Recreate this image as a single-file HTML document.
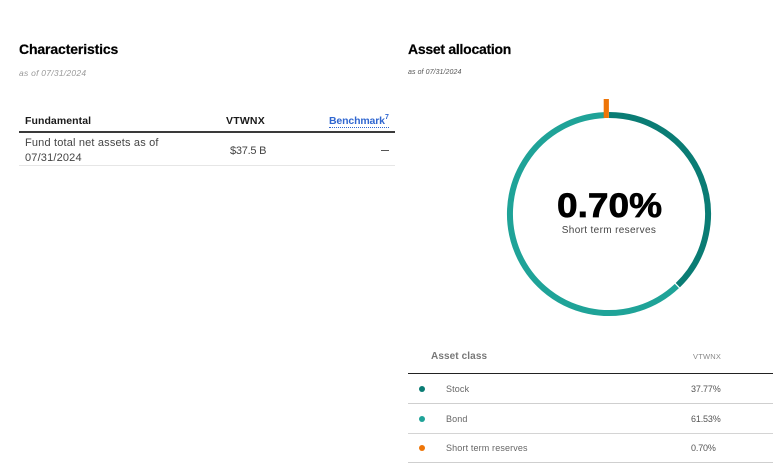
<!DOCTYPE html>
<html>
<head>
<meta charset="utf-8">
<style>
html,body{margin:0;padding:0;background:#fff}
body{width:773px;height:476px;position:relative;overflow:hidden;font-family:"Liberation Sans",sans-serif;color:#1a1a1a}
.t{position:absolute;white-space:nowrap;line-height:1}
.l{position:absolute}
.dot{position:absolute;width:6px;height:6px;border-radius:50%}
</style>
</head>
<body>
<div class="t" style="left:19px;top:42px;font-size:14px;font-weight:700;color:#000;letter-spacing:-.13px;-webkit-text-stroke:.2px #000">Characteristics</div>
<div class="t" style="left:19px;top:69px;font-size:8.5px;font-style:italic;color:#999;letter-spacing:.25px">as of 07/31/2024</div>

<div class="t" style="left:25px;top:116px;font-size:10.5px;font-weight:700;color:#1a1a1a;letter-spacing:.07px">Fundamental</div>
<div class="t" style="left:226px;top:116px;font-size:10.5px;font-weight:700;color:#1a1a1a;letter-spacing:.2px">VTWNX</div>
<div class="t" style="left:329px;top:116px;font-size:10.5px;font-weight:700;color:#2f66d0;letter-spacing:-.15px">Benchmark</div>
<div class="t" style="left:385px;top:114px;font-size:7px;font-weight:700;color:#2f66d0">7</div>
<div class="l" style="left:329px;top:127px;width:60px;border-top:1px dotted #2f66d0"></div>
<div class="l" style="left:19px;top:131px;width:376px;height:2px;background:#3a3a3a"></div>
<div class="t" style="left:25px;top:136px;font-size:11px;line-height:15px;color:#444;letter-spacing:.17px">Fund total net assets as of<br>07/31/2024</div>
<div class="t" style="left:230px;top:146px;font-size:11px;color:#444;letter-spacing:-.25px">$37.5 B</div>
<div class="l" style="left:381px;top:150px;width:8px;height:1px;background:#555"></div>
<div class="l" style="left:19px;top:165px;width:376px;height:1px;background:#e6e6e6"></div>

<div class="t" style="left:408px;top:42px;font-size:14px;font-weight:700;color:#000;letter-spacing:-.27px;-webkit-text-stroke:.2px #000">Asset allocation</div>
<div class="t" style="left:408px;top:69px;font-size:7px;font-style:italic;color:#555;letter-spacing:.08px">as of 07/31/2024</div>

<svg class="l" style="left:0;top:0" width="773" height="476" viewBox="0 0 773 476">
  <path d="M609 115 A99 99 0 0 1 677.8 285.2" fill="none" stroke="#0a7c74" stroke-width="6"/>
  <path d="M676.9 286 A99 99 0 1 1 604.5 115.1" fill="none" stroke="#1fa398" stroke-width="6"/>
  <rect x="603.7" y="99" width="5.2" height="19" fill="#ee7508"/>
  <text x="557" y="217" textLength="105" lengthAdjust="spacingAndGlyphs" font-family="Liberation Sans, sans-serif" font-size="34" font-weight="700" fill="#000" stroke="#000" stroke-width=".7">0.70%</text>
  <text x="609" y="233" text-anchor="middle" font-family="Liberation Sans, sans-serif" font-size="10" fill="#444" letter-spacing=".35">Short term reserves</text>
</svg>

<div class="t" style="left:431px;top:352px;font-size:10px;font-weight:700;color:#777;letter-spacing:.1px">Asset class</div>
<div class="t" style="left:693px;top:353px;font-size:7.5px;color:#8a8a8a;letter-spacing:.2px">VTWNX</div>
<div class="l" style="left:408px;top:373px;width:365px;height:1px;background:#222"></div>

<div class="dot" style="left:419px;top:386px;background:#0a7c74"></div>
<div class="t" style="left:446px;top:385px;font-size:9px;color:#666;letter-spacing:.14px">Stock</div>
<div class="t" style="left:691px;top:385px;font-size:9px;color:#555;letter-spacing:-.15px">37.77%</div>
<div class="l" style="left:408px;top:403px;width:365px;height:1px;background:#cfcfcf"></div>

<div class="dot" style="left:419px;top:416px;background:#1fa398"></div>
<div class="t" style="left:446px;top:415px;font-size:9px;color:#666;letter-spacing:.14px">Bond</div>
<div class="t" style="left:691px;top:415px;font-size:9px;color:#555;letter-spacing:-.15px">61.53%</div>
<div class="l" style="left:408px;top:433px;width:365px;height:1px;background:#d4d4d4"></div>

<div class="dot" style="left:419px;top:445px;background:#ee7508"></div>
<div class="t" style="left:446px;top:444px;font-size:9px;color:#666;letter-spacing:.14px">Short term reserves</div>
<div class="t" style="left:691px;top:444px;font-size:9px;color:#555;letter-spacing:-.15px">0.70%</div>
<div class="l" style="left:408px;top:462px;width:365px;height:1px;background:#cfcfcf"></div>
</body>
</html>
